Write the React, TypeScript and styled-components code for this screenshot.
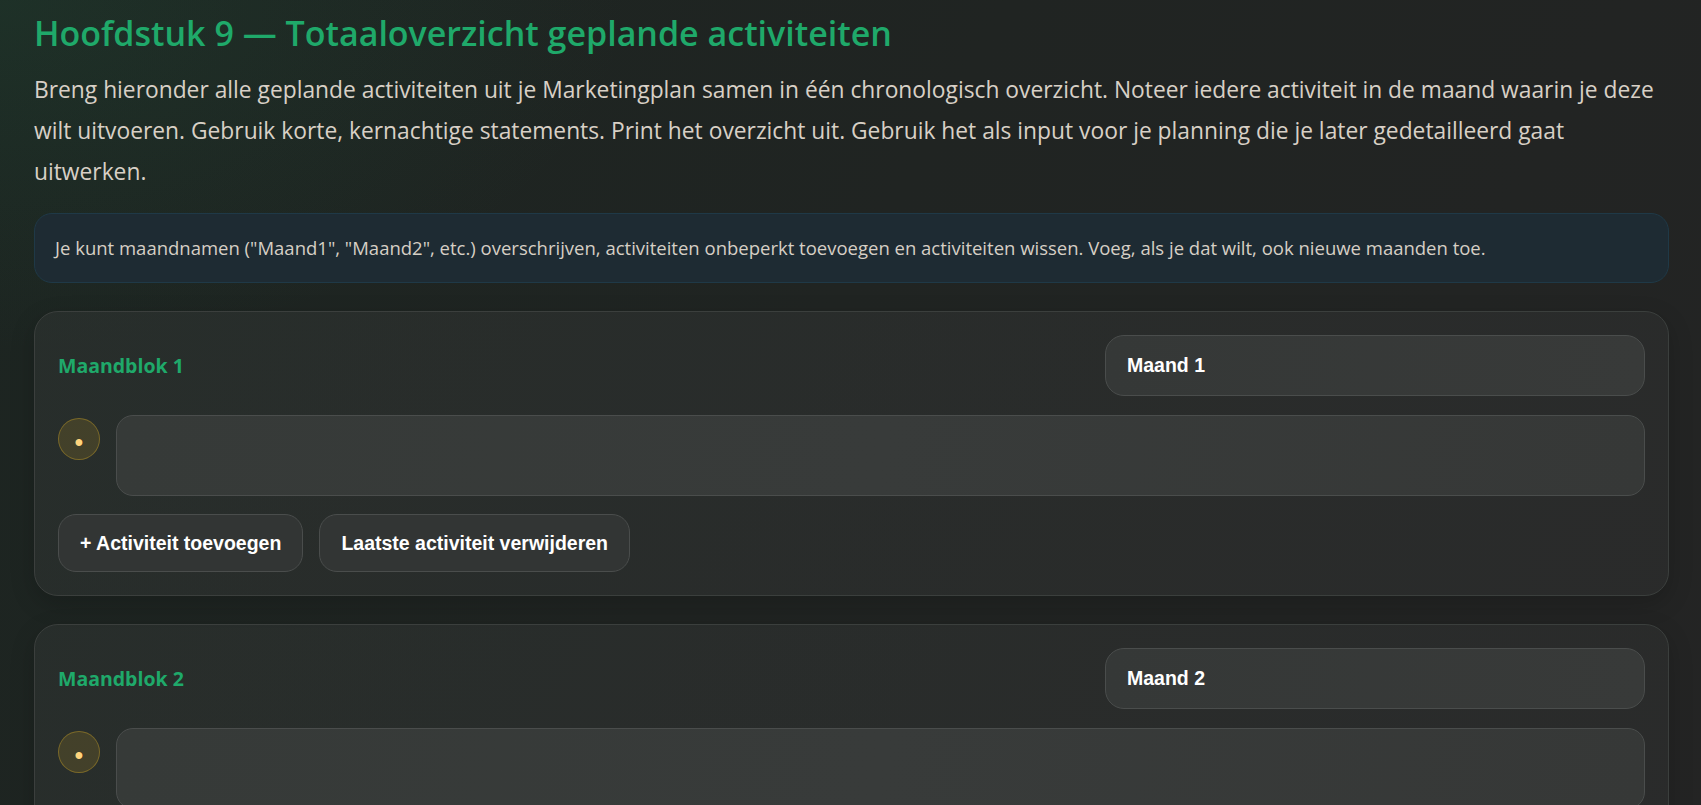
import React, { useState } from "react";
import styled, { createGlobalStyle } from "styled-components";

const GlobalStyle = createGlobalStyle`
  * { box-sizing: border-box; }
  html, body {
    margin: 0;
    padding: 0;
    min-height: 100%;
    background: #1f2321;
  }
  body {
    font-family: "Open Sans", "Noto Sans", sans-serif;
    color: #d8d0c6;
  }
`;

const Page = styled.div`
  min-height: 100vh;
  padding: 11px 32px 40px 34px;
  background:
    radial-gradient(ellipse 900px 500px at 0 0, rgba(40, 110, 75, 0.16), transparent 70%),
    linear-gradient(120deg, #1c2521 0%, #202422 45%, #242424 100%);
`;

const Title = styled.h1`
  margin: 0;
  font-size: 34px;
  line-height: 44px;
  font-weight: 600;
  color: #1fa96a;
`;

const Intro = styled.p`
  margin: 14px 0 0;
  font-size: 22.8px;
  line-height: 41px;
  color: #d8d0c6;
`;

const Notice = styled.div`
  margin-top: 21px;
  padding: 21px 20px;
  border-radius: 18px;
  background: #1e2b33;
  border: 1px solid #1f3947;
  font-size: 18.5px;
  line-height: 26px;
  color: #d6cfc5;
`;

const Blocks = styled.div`
  margin-top: 28px;
  display: flex;
  flex-direction: column;
  gap: 28px;
`;

const Card = styled.section`
  padding: 23px;
  border-radius: 24px;
  border: 1px solid #3b3f3d;
  background: linear-gradient(135deg, rgba(48, 53, 51, 0.55), rgba(44, 45, 45, 0.75));
  box-shadow: 0 8px 24px rgba(0, 0, 0, 0.18);
`;

const CardHead = styled.div`
  display: flex;
  align-items: center;
  justify-content: space-between;
  margin-bottom: 19px;
`;

const BlockLabel = styled.span`
  font-size: 19.5px;
  font-weight: 700;
  color: #1fa96a;
`;

const MonthInput = styled.input`
  width: 540px;
  height: 61px;
  padding: 0 21px;
  border-radius: 19px;
  border: 1px solid #4a4d4c;
  background: linear-gradient(90deg, #353837, #383a39);
  color: #ffffff;
  font-family: "Liberation Sans", Arial, sans-serif;
  font-size: 19.5px;
  font-weight: 700;
  outline: none;
`;

const ActivityRow = styled.div`
  display: flex;
  align-items: flex-start;
  gap: 16px;
  margin-bottom: 18px;
`;

const Bullet = styled.span`
  flex: 0 0 42px;
  width: 42px;
  height: 42px;
  margin-top: 3px;
  border-radius: 50%;
  background: rgba(214, 170, 40, 0.16);
  border: 1px solid rgba(214, 170, 40, 0.38);
  display: flex;
  align-items: center;
  justify-content: center;
  padding-top: 7px;
  color: #ffd47c;
  font-family: "Liberation Sans", Arial, sans-serif;
  font-size: 25px;
  line-height: 1;
`;

const ActivityField = styled.textarea`
  flex: 1;
  height: 81px;
  padding: 14px 20px;
  border-radius: 17px;
  border: 1px solid #4a4d4c;
  background: linear-gradient(100deg, #363a38 0%, #383b3a 50%, #363837 100%);
  color: #ffffff;
  font-family: "Liberation Sans", Arial, sans-serif;
  font-size: 18px;
  resize: none;
  outline: none;
`;

const Actions = styled.div`
  display: flex;
  gap: 16px;
`;

const ActionButton = styled.button`
  height: 58px;
  padding: 0 21px;
  border-radius: 18px;
  border: 1px solid #4a4d4c;
  background: #323534;
  color: #ffffff;
  font-family: "Liberation Sans", Arial, sans-serif;
  font-size: 19.5px;
  font-weight: 700;
  cursor: pointer;
`;

type Block = { name: string; activities: string[] };

export default function App() {
  const [blocks, setBlocks] = useState<Block[]>([
    { name: "Maand 1", activities: [""] },
    { name: "Maand 2", activities: [""] },
  ]);

  const update = (i: number, fn: (b: Block) => Block) =>
    setBlocks((prev) => prev.map((b, j) => (j === i ? fn(b) : b)));

  return (
    <>
      <GlobalStyle />
      <Page>
        <Title>Hoofdstuk 9 — Totaaloverzicht geplande activiteiten</Title>
        <Intro>
          Breng hieronder alle geplande activiteiten uit je Marketingplan samen in één
          chronologisch overzicht. Noteer iedere activiteit in de maand waarin je deze
          wilt uitvoeren. Gebruik korte, kernachtige statements. Print het overzicht uit.
          Gebruik het als input voor je planning die je later gedetailleerd gaat
          uitwerken.
        </Intro>
        <Notice>
          Je kunt maandnamen ("Maand1", "Maand2", etc.) overschrijven, activiteiten
          onbeperkt toevoegen en activiteiten wissen. Voeg, als je dat wilt, ook nieuwe
          maanden toe.
        </Notice>
        <Blocks>
          {blocks.map((block, i) => (
            <Card key={i}>
              <CardHead>
                <BlockLabel>Maandblok {i + 1}</BlockLabel>
                <MonthInput
                  value={block.name}
                  onChange={(e) => update(i, (b) => ({ ...b, name: e.target.value }))}
                />
              </CardHead>
              {block.activities.map((a, k) => (
                <ActivityRow key={k}>
                  <Bullet>•</Bullet>
                  <ActivityField
                    value={a}
                    onChange={(e) =>
                      update(i, (b) => ({
                        ...b,
                        activities: b.activities.map((x, n) => (n === k ? e.target.value : x)),
                      }))
                    }
                  />
                </ActivityRow>
              ))}
              <Actions>
                <ActionButton
                  onClick={() => update(i, (b) => ({ ...b, activities: [...b.activities, ""] }))}
                >
                  + Activiteit toevoegen
                </ActionButton>
                <ActionButton
                  onClick={() =>
                    update(i, (b) => ({ ...b, activities: b.activities.slice(0, -1) }))
                  }
                >
                  Laatste activiteit verwijderen
                </ActionButton>
              </Actions>
            </Card>
          ))}
        </Blocks>
      </Page>
    </>
  );
}
